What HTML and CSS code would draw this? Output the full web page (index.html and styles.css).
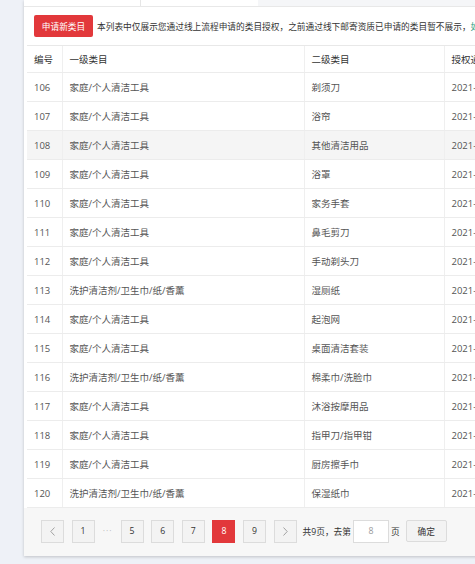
FILE: index.html
```html
<!DOCTYPE html>
<html lang="zh-CN">
<head>
<meta charset="utf-8">
<title>类目授权</title>
<link rel="stylesheet" href="styles.css">
</head>
<body>
<div class="page">
  <div class="panel">
    <div class="tabs"><div class="tab"></div><div class="tab tab2"></div></div>
    <div class="toolbar">
      <button class="btn-apply">申请新类目</button>
      <span class="notice">本列表中仅展示您通过线上流程申请的类目授权，之前通过线下邮寄资质已申请的类目暂不展示，<span class="link">如需查看请联系对接人员</span></span>
    </div>
    <div class="table-wrap">
      <table class="grid">
        <colgroup><col class="c1"><col class="c2"><col class="c3"><col class="c4"><col class="c5"></colgroup>
        <thead>
          <tr><th>编号</th><th>一级类目</th><th>二级类目</th><th>授权通过时间</th><th>状态</th></tr>
        </thead>
        <tbody>
          <tr><td>106</td><td>家庭/个人清洁工具</td><td>剃须刀</td><td>2021-06-15</td><td>已授权</td></tr>
          <tr><td>107</td><td>家庭/个人清洁工具</td><td>浴帘</td><td>2021-06-15</td><td>已授权</td></tr>
          <tr class="hover"><td>108</td><td>家庭/个人清洁工具</td><td>其他清洁用品</td><td>2021-06-15</td><td>已授权</td></tr>
          <tr><td>109</td><td>家庭/个人清洁工具</td><td>浴罩</td><td>2021-06-15</td><td>已授权</td></tr>
          <tr><td>110</td><td>家庭/个人清洁工具</td><td>家务手套</td><td>2021-06-15</td><td>已授权</td></tr>
          <tr><td>111</td><td>家庭/个人清洁工具</td><td>鼻毛剪刀</td><td>2021-06-15</td><td>已授权</td></tr>
          <tr><td>112</td><td>家庭/个人清洁工具</td><td>手动剃头刀</td><td>2021-06-15</td><td>已授权</td></tr>
          <tr><td>113</td><td>洗护清洁剂/卫生巾/纸/香薰</td><td>湿厕纸</td><td>2021-06-15</td><td>已授权</td></tr>
          <tr><td>114</td><td>家庭/个人清洁工具</td><td>起泡网</td><td>2021-06-15</td><td>已授权</td></tr>
          <tr><td>115</td><td>家庭/个人清洁工具</td><td>桌面清洁套装</td><td>2021-06-15</td><td>已授权</td></tr>
          <tr><td>116</td><td>洗护清洁剂/卫生巾/纸/香薰</td><td>棉柔巾/洗脸巾</td><td>2021-06-15</td><td>已授权</td></tr>
          <tr><td>117</td><td>家庭/个人清洁工具</td><td>沐浴按摩用品</td><td>2021-06-15</td><td>已授权</td></tr>
          <tr><td>118</td><td>家庭/个人清洁工具</td><td>指甲刀/指甲钳</td><td>2021-06-15</td><td>已授权</td></tr>
          <tr><td>119</td><td>家庭/个人清洁工具</td><td>厨房擦手巾</td><td>2021-06-15</td><td>已授权</td></tr>
          <tr><td>120</td><td>洗护清洁剂/卫生巾/纸/香薰</td><td>保湿纸巾</td><td>2021-06-15</td><td>已授权</td></tr>
        </tbody>
      </table>
    </div>
    <div class="pager">
      <span class="pg arrow"><svg width="5" height="9" viewBox="0 0 5 9"><polyline points="4.5,0.5 0.8,4.5 4.5,8.5" fill="none" stroke="#999" stroke-width="0.9"/></svg></span>
      <span class="pg first">1</span>
      <span class="ellipsis">···</span>
      <span class="pg">5</span>
      <span class="pg">6</span>
      <span class="pg">7</span>
      <span class="pg current">8</span>
      <span class="pg">9</span>
      <span class="pg arrow"><svg width="5" height="9" viewBox="0 0 5 9"><polyline points="0.5,0.5 4.2,4.5 0.5,8.5" fill="none" stroke="#999" stroke-width="0.9"/></svg></span>
      <span class="total">共9页，去第</span>
      <input class="goto" type="text" value="8">
      <span class="unit">页</span>
      <button class="confirm">确定</button>
    </div>
  </div>
</div>
</body>
</html>
```
FILE: styles.css
```css
html, body {
  margin: 0;
  height: 100%;
}
body {
  background: #eef1f7;
  font-family: "Open Sans", "Noto Sans CJK SC", sans-serif;
  overflow: hidden;
}
.page {
  display: flex;
  padding-left: 24px;
}
.panel {
  flex: none;
  width: 760px;
  background: #fff;
  box-shadow: 0 1px 3px rgba(0, 0, 0, 0.2);
}
.tabs {
  display: flex;
  height: 6px;
  background: #f5f6f8;
  border-bottom: 1px solid #e8e8e8;
}
.tab {
  width: 116px;
  background: #fff;
  border-right: 1px solid #e6e6e6;
}
.tab2 {
  width: 117px;
  border-right: 0;
}
.toolbar {
  display: flex;
  align-items: center;
  padding: 8px 10px;
}
.btn-apply {
  flex: none;
  width: 59px;
  height: 22px;
  padding: 0;
  border: 0;
  border-radius: 2px;
  background: #e2383b;
  color: #fff;
  font-family: inherit;
  font-size: 8.7px;
}
.notice {
  margin-left: 4px;
  font-size: 8.7px;
  color: #333;
  white-space: nowrap;
}
.link {
  color: #2a9a80;
}
.table-wrap {
  padding-left: 3px;
}
.grid {
  border-collapse: collapse;
  table-layout: fixed;
  width: 733px;
  font-size: 9.5px;
  color: #555;
}
.c1 { width: 35px; }
.c2 { width: 242px; }
.c3 { width: 140px; }
.c4 { width: 170px; }
.c5 { width: 146px; }
.grid th,
.grid td {
  padding: 0 7px;
  text-align: left;
  white-space: nowrap;
  border-left: 1px solid #efefef;
  border-bottom: 1px solid #ececec;
}
.grid th:first-child,
.grid td:first-child {
  border-left: 0;
}
.grid th {
  height: 26px;
  font-weight: normal;
  color: #333;
  border-top: 1px solid #e8e8e8;
}
.grid td {
  height: 28px;
}
.grid tr.hover td {
  background: #f5f5f5;
}
.pager {
  display: flex;
  align-items: center;
  height: 48px;
  box-sizing: border-box;
  padding: 0 0 2px 17px;
  background: #f7f7f7;
  font-size: 8.7px;
  color: #333;
}
.pg {
  flex: none;
  width: 23px;
  height: 23px;
  box-sizing: border-box;
  border: 1px solid #dcdcdc;
  background: #f3f3f3;
  display: flex;
  align-items: center;
  justify-content: center;
  margin-right: 7.6px;
}
.pg.first {
  margin-right: 0;
}
.pg.current {
  background: #e2383b;
  border-color: #e2383b;
  color: #fff;
}
.ellipsis {
  width: 26px;
  text-align: center;
  color: #bbb;
  letter-spacing: 1px;
}
.total {
  margin-left: -1.6px;
}
.goto {
  width: 36px;
  height: 23px;
  box-sizing: border-box;
  margin: 0 0 0 2px;
  padding: 0;
  border: 1px solid #dcdcdc;
  background: #fff;
  text-align: center;
  color: #999;
  font-family: inherit;
  font-size: 8.7px;
  outline: none;
}
.unit {
  margin-left: 2px;
}
.confirm {
  margin-left: 6px;
  width: 41px;
  height: 22px;
  padding: 0;
  border: 1px solid #dcdcdc;
  border-radius: 2px;
  background: #f3f3f3;
  color: #333;
  font-family: inherit;
  font-size: 8.7px;
}
```
